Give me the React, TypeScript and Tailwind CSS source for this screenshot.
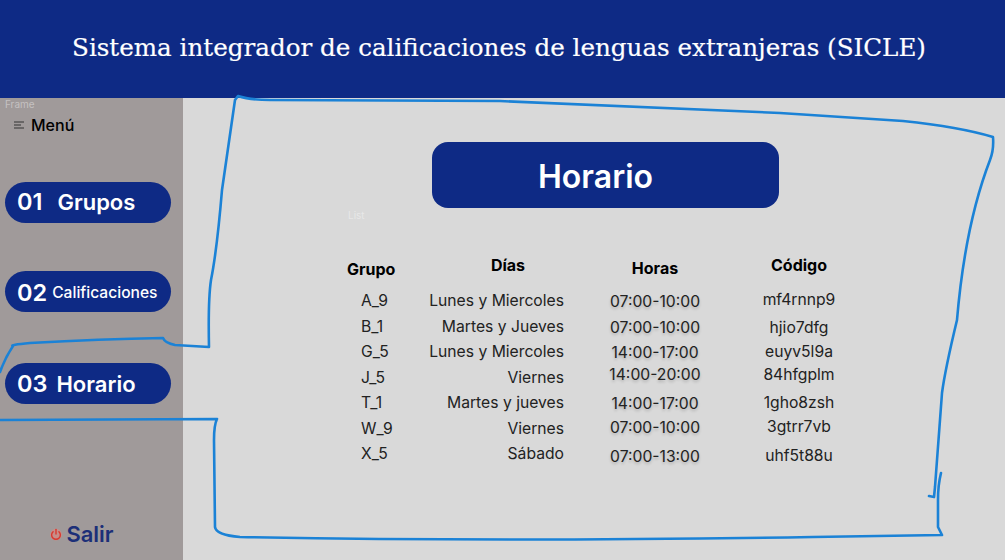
const grupos = ["A_9", "B_1", "G_5", "J_5", "T_1", "W_9", "X_5"];
const dias = ["Lunes y Miercoles", "Martes y Jueves", "Lunes y Miercoles", "Viernes", "Martes y jueves", "Viernes", "Sábado"];
const horas: [string, string][] = [
  ["07:00-10:00", "h-[26px]"],
  ["07:00-10:00", "h-[25px]"],
  ["14:00-17:00", "h-[22px]"],
  ["14:00-20:00", "h-[29px]"],
  ["14:00-17:00", "h-[24px]"],
  ["07:00-10:00", "h-[29px]"],
  ["07:00-13:00", "h-[26px]"],
];
const codigos: [string, string][] = [
  ["mf4rnnp9", "h-[28px]"],
  ["hjio7dfg", "h-[24px]"],
  ["euyv5l9a", "h-[23px]"],
  ["84hfgplm", "h-[28px]"],
  ["1gho8zsh", "h-[24px]"],
  ["3gtrr7vb", "h-[29px]"],
  ["uhf5t88u", "h-[26px]"],
];

function Pill({ num, label, small, gap, className, inner }: { num: string; label: string; small?: boolean; gap: string; className: string; inner?: string }) {
  return (
    <div className={`ml-[5px] flex h-[41px] w-[166px] items-center rounded-full bg-[#0e2a85] pl-[12px] font-semibold text-white ${inner ?? "pb-[1px]"} ${className}`}>
      <span className="text-[23.5px] leading-none">{num}</span>
      <span className={`${gap} ${small ? "text-[15.6px] font-medium" : "text-[22px]"} leading-none`}>{label}</span>
    </div>
  );
}

export default function App() {
  return (
    <div className="relative flex h-[560px] w-[1005px] flex-col overflow-hidden bg-[#d9d9d9] font-['Inter',sans-serif]">
      <header className="flex h-[98px] items-center justify-center bg-[#0e2a85] pb-[2px] pr-[7px]">
        <h1 className="whitespace-nowrap font-['DejaVu_Serif',serif] text-[24.6px] font-normal leading-none text-white [-webkit-text-stroke:0.2px_white]">
          Sistema integrador de calificaciones de lenguas extranjeras (SICLE)
        </h1>
      </header>
      <div className="flex flex-1">
        <aside className="flex w-[183px] flex-col bg-[#a09a9a]">
          <div className="pl-[5px] text-[10px] leading-[12px] text-white/40">Frame</div>
          <div className="mt-[5px] flex items-center gap-[7px] pl-[14px] text-[16px] font-medium leading-[20px] text-black">
            <svg width="10" height="8" viewBox="0 0 10 8" className="stroke-[#333]" strokeWidth="1.2" fill="none">
              <path d="M0 1h10M0 4h7M0 7h10" />
            </svg>
            Menú
          </div>
          <Pill num="01" label="Grupos" gap="ml-[15px]" className="mt-[47px]" />
          <Pill num="02" label="Calificaciones" small gap="ml-[5px]" className="mt-[48px]" inner="pt-[2px]" />
          <Pill num="03" label="Horario" gap="ml-[9px]" className="mt-[51px]" inner="pb-[0px]" />
          <div className="mb-[15px] mt-auto flex items-center justify-center gap-[3px] pr-[20px]">
            <svg width="14" height="14" viewBox="0 0 24 24" fill="none" strokeLinecap="round">
              <circle cx="12" cy="13" r="10" fill="#e7857c" opacity="0.55" />
              <path d="M12 4v8" stroke="#d9382f" strokeWidth="2.4" />
              <path d="M7 8a7.5 7.5 0 1 0 10 0" stroke="#d9382f" strokeWidth="2.4" />
            </svg>
            <span className="text-[22px] font-semibold leading-none text-[#1c2f78]">Salir</span>
          </div>
        </aside>
        <main className="flex flex-1 flex-col">
          <div className="ml-[249px] mt-[44px] flex h-[66px] w-[347px] items-center justify-center rounded-[16px] bg-[#0e2a85] pr-[20px] pt-[4px] text-[32px] font-semibold leading-none text-white">
            Horario
          </div>
          <div className="ml-[165px] mt-[1px] text-[10px] leading-[12px] text-white/40">List</div>
          <div className="ml-[164px] mt-[38px] flex text-[15.7px] leading-[25.5px] text-[#222]">
            <div className="w-[60px]">
              <div className="mb-[9px] text-[16px] font-bold leading-[20px] text-black">Grupo</div>
              {grupos.map((g) => (
                <div key={g} className="pl-[14px]">{g}</div>
              ))}
            </div>
            <div className="w-[157px] text-right">
              <div className="mb-[13px] mt-[-4px] pl-[45px] text-center text-[16px] font-bold leading-[20px] text-black">Días</div>
              {dias.map((d, i) => (
                <div key={i}>{d}</div>
              ))}
            </div>
            <div className="ml-[27px] w-[128px] text-center">
              <div className="mb-[11px] mt-[-1px] text-[16px] font-bold leading-[20px] text-black">Horas</div>
              {horas.map(([h, c], i) => (
                <div key={i} className={`${c} [text-shadow:0_2px_3px_rgba(0,0,0,0.2)]`}>{h}</div>
              ))}
            </div>
            <div className="ml-[16px] w-[128px] text-center">
              <div className="mb-[12px] mt-[-4px] text-[16px] font-bold leading-[20px] text-black">Código</div>
              {codigos.map(([h, c], i) => (
                <div key={i} className={c}>{h}</div>
              ))}
            </div>
          </div>
        </main>
      </div>
      <svg className="pointer-events-none absolute left-0 top-0" width="1005" height="560" fill="none" stroke="#1b82d6" strokeWidth="2.6" strokeLinecap="round" strokeLinejoin="round">
        <path d="M0 372Q5 358 13 346Q9 345 30 343Q100 339 163 338Q165 343 175 345L209 347Q208 300 211 280Q217 250 222 190L235 100L238 96Q250 100 270 100L500 101L780 113L903 121Q960 127 993 137Q994 150 990 160Q965 225 957 320Q945 370 942 393L935 487L934 497L929 496" />
        <path d="M941 473Q938 485 938 500L938 527L942 535L813 537Q500 542 240 537Q216 535 215 527L214 440Q214 425 217 419L0 420" />
      </svg>
    </div>
  );
}
